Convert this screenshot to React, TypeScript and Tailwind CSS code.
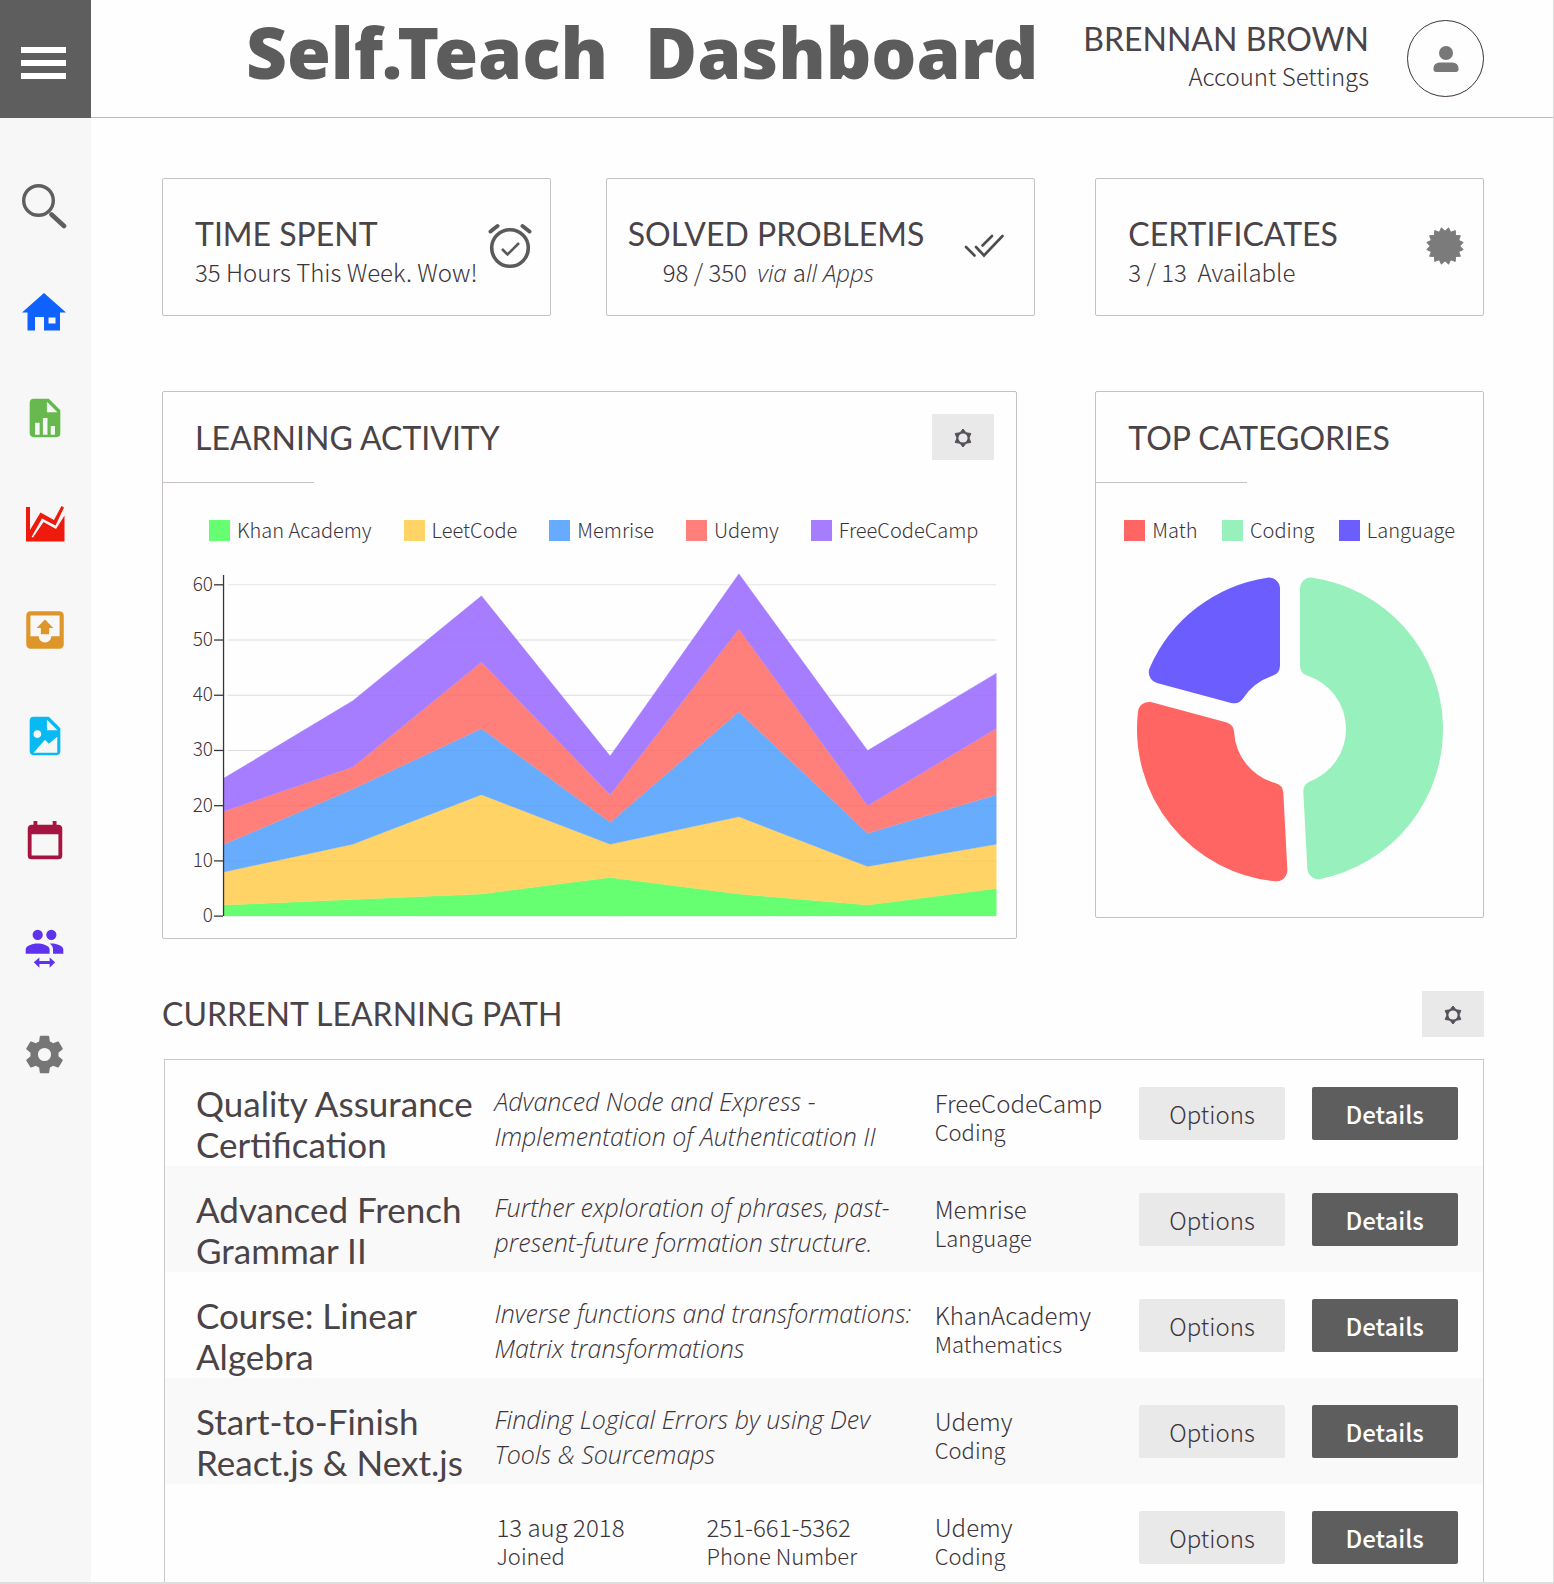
import type { ReactNode } from "react";

const BODY = "font-['Noto_Sans_CJK_SC',sans-serif]";
const ITALIC = "font-['Open_Sans',sans-serif] italic";

const heading = "font-['Lato',sans-serif] text-[32px] leading-10 text-[#4a4347]";

/* ---------- icons ---------- */

type IconProps = { d: string; size: string; color: string };

function PathIcon({ d, size, color }: IconProps) {
  return (
    <svg viewBox="0 0 24 24" className={`${size} ${color}`} fill="currentColor" aria-hidden="true">
      <path fillRule="evenodd" d={d} />
    </svg>
  );
}

const fileChart =
  "M13,9H18.5L13,3.5V9M6,2H14L20,8V20A2,2 0 0,1 18,22H6C4.89,22 4,21.1 4,20V4C4,2.89 4.89,2 6,2M6.8,20.7H9.2V14.5H6.8V20.7M10.9,20.7H13.3V12H10.9V20.7M15,20.7H17.2V16.2H15V20.7Z";
const fileImage =
  "M13,9H18.5L13,3.5V9M6,2H14L20,8V20A2,2 0 0,1 18,22H6C4.89,22 4,21.1 4,20V4C4,2.89 4.89,2 6,2M6,20.7H18.4V12.4L14,16L12,14L6,20.7M8,9A2,2 0 0,0 6,11A2,2 0 0,0 8,13A2,2 0 0,0 10,11A2,2 0 0,0 8,9Z";
const inboxUp =
  "M14,14H10V11H8L12,7L16,11H14V14M5,15V5H19V15H15A3,3 0 0,1 12,18A3,3 0 0,1 9,15H5M19,3H5C3.89,3 3,3.9 3,5V19A2,2 0 0,0 5,21H19A2,2 0 0,0 21,19V5A2,2 0 0,0 19,3Z";
const calendar =
  "M19,19H5V8H19M16,1V3H8V1H6V3H5C3.89,3 3,3.89 3,5V19A2,2 0 0,0 5,21H19A2,2 0 0,0 21,19V5C21,3.89 20.1,3 19,3H18V1Z";
const peopleSwitch =
  "M16,9C18.33,9 23,10.17 23,12.5V15H17V12.5C17,11 16.19,9.89 15.04,9.05L16,9M8,9C10.33,9 15,10.17 15,12.5V15H1V12.5C1,10.17 5.67,9 8,9M8,7A3,3 0 0,1 5,4A3,3 0 0,1 8,1A3,3 0 0,1 11,4A3,3 0 0,1 8,7M16,7A3,3 0 0,1 13,4A3,3 0 0,1 16,1A3,3 0 0,1 19,4A3,3 0 0,1 16,7M9,17.2V19.3H15V17.2L18.25,20L15,23.25V21H9V23.25L5.75,20L9,17.2Z";
const cog =
  "M12,15.5A3.5,3.5 0 0,1 8.5,12A3.5,3.5 0 0,1 12,8.5A3.5,3.5 0 0,1 15.5,12A3.5,3.5 0 0,1 12,15.5M19.43,12.97C19.47,12.65 19.5,12.33 19.5,12C19.5,11.67 19.47,11.34 19.43,11L21.54,9.37C21.73,9.22 21.78,8.95 21.66,8.73L19.66,5.27C19.54,5.05 19.27,4.96 19.05,5.05L16.56,6.05C16.04,5.66 15.5,5.32 14.87,5.07L14.5,2.42C14.46,2.18 14.25,2 14,2H10C9.75,2 9.54,2.18 9.5,2.42L9.13,5.07C8.5,5.32 7.96,5.66 7.44,6.05L4.95,5.05C4.73,4.96 4.46,5.05 4.34,5.27L2.34,8.73C2.21,8.95 2.27,9.22 2.46,9.37L4.57,11C4.53,11.34 4.5,11.67 4.5,12C4.5,12.33 4.53,12.65 4.57,12.97L2.46,14.63C2.27,14.78 2.21,15.05 2.34,15.27L4.34,18.73C4.46,18.95 4.73,19.03 4.95,18.95L7.44,17.94C7.96,18.34 8.5,18.68 9.13,18.93L9.5,21.58C9.54,21.82 9.75,22 10,22H14C14.25,22 14.46,21.82 14.5,21.58L14.87,18.93C15.5,18.67 16.04,18.34 16.56,17.94L19.05,18.95C19.27,19.03 19.54,18.95 19.66,18.73L21.66,15.27C21.78,15.05 21.73,14.78 21.54,14.63L19.43,12.97Z";

const SearchIcon = () => (
  <svg viewBox="1 0 46 46" className="size-[46px] text-[#5f5f5f]" fill="none" stroke="currentColor" aria-hidden="true">
    <circle cx="17.5" cy="17.5" r="14.8" strokeWidth="3.4" />
    <path d="M30.5 31.5 43 43" strokeWidth="4.6" strokeLinecap="round" />
  </svg>
);

const HomeIcon = () => (
  <svg viewBox="1 0 46 40" className="h-10 w-[46px] text-[#0f62fe]" fill="currentColor" aria-hidden="true">
    <path fillRule="evenodd" d="M23 1 45 20.5H39V38.5H23V25H14V38.5H6.500V20.500H1ZM27.500 25.500V31.500H34.500V25.500Z" />
  </svg>
);

const AreaIcon = () => (
  <svg viewBox="0 0 40 36" className="h-9 w-10 text-[#ee1a0c]" fill="currentColor" aria-hidden="true">
    <path d="M1 1H5V24L15.500 6.500 29 14 36.500 0 39 1.500 30.500 19.500 17 12.500 6.500 31 8 31.500 18.500 16 31 23 39.500 9.500V35.500H1Z" />
  </svg>
);

const ClockIcon = () => (
  <svg viewBox="0 0 46 46" className="size-[46px] shrink-0 text-[#5a5a5a]" fill="none" stroke="currentColor" aria-hidden="true">
    <circle cx="23" cy="25" r="18.300" strokeWidth="3.600" />
    <path d="m15 26 5.500 5.500L32 20" strokeWidth="2.600" />
    <path d="m3.500 8.500 7-5.500M42.500 8.500l-7-5.500" strokeWidth="4" strokeLinecap="round" />
  </svg>
);

const DoubleCheckIcon = () => (
  <svg viewBox="0 0 40 24" className="h-6 w-10 shrink-0 text-[#4d4d4d]" fill="none" stroke="currentColor" strokeWidth="2.600" strokeLinecap="round" aria-hidden="true">
    <path d="m2 13 8.500 8.500M12 13l8 8.500L38.500 2M28 2 18.500 11.500" />
  </svg>
);

function starPoints(count: number, outer: number, inner: number, turn: number) {
  return Array.from({ length: count * 2 }, (_, i) => {
    const r = i % 2 ? inner : outer;
    const a = ((i + turn) * Math.PI) / count;
    return `${(r * Math.sin(a)).toFixed(2)},${(-r * Math.cos(a)).toFixed(2)}`;
  }).join(" ");
}

const SealIcon = () => (
  <svg viewBox="-20 -20 40 40" className="size-10 shrink-0 text-[#7b7b7b]" fill="currentColor" aria-hidden="true">
    <polygon points={starPoints(16, 18.5, 14.8, 1)} stroke="currentColor" strokeWidth="1" strokeLinejoin="round" />
  </svg>
);

const PersonIcon = () => (
  <svg viewBox="0 0 26 28" className="h-7 w-[26px] text-[#787878]" fill="currentColor" aria-hidden="true">
    <circle cx="13" cy="8" r="7" />
    <path d="M0.500 23.500C0.500 19 4 17.500 8 17.500H18C22 17.500 25.500 19 25.500 23.500V24.500C25.500 26 24.500 27 23 27H3C1.500 27 0.500 26 0.500 24.500Z" />
  </svg>
);

function GearButton({ label }: { label: string }) {
  return (
    <button type="button" aria-label={label} className="flex h-[46px] w-[62px] items-center justify-center bg-[#e9e9e9] pt-px text-[#55505a]">
      <svg viewBox="-10 -10 20 20" className="size-5" aria-hidden="true">
        <polygon points={starPoints(6, 9, 6, 0)} fill="currentColor" stroke="currentColor" strokeWidth="1" strokeLinejoin="round" />
        <circle r="4.600" fill="#e9e9e9" />
      </svg>
    </button>
  );
}

/* ---------- sidebar and header ---------- */

const nav: { label: string; icon: ReactNode }[] = [
  { label: "Search", icon: <SearchIcon /> },
  { label: "Home", icon: <HomeIcon /> },
  { label: "Reports", icon: <PathIcon d={fileChart} size="size-[46px]" color="text-[#65b94d]" /> },
  { label: "Trends", icon: <AreaIcon /> },
  { label: "Inbox", icon: <PathIcon d={inboxUp} size="size-[50px]" color="text-[#de962b]" /> },
  { label: "Images", icon: <PathIcon d={fileImage} size="size-[46px]" color="text-[#08b9f2]" /> },
  { label: "Calendar", icon: <PathIcon d={calendar} size="size-[46px]" color="text-[#a51542]" /> },
  { label: "People", icon: <PathIcon d={peopleSwitch} size="size-[41px]" color="text-[#5f33ee]" /> },
  { label: "Settings", icon: <PathIcon d={cog} size="size-[45px]" color="text-[#767676]" /> },
];

function Sidebar() {
  return (
    <aside className="w-[91px] shrink-0 bg-[#f7f7f7]">
      <button type="button" aria-label="Menu" className="flex h-[118px] w-full flex-col items-center justify-center gap-[7px] bg-[#5e5e5e] pt-2 pr-1">
        <span className="h-[6px] w-[45px] bg-white" />
        <span className="h-[6px] w-[45px] bg-white" />
        <span className="h-[6px] w-[45px] bg-white" />
      </button>
      <nav className="flex flex-col pt-[35px]">
        {nav.map((item) => (
          <a key={item.label} href="#" aria-label={item.label} className="flex h-[106px] items-center justify-center pr-[2px]">
            {item.icon}
          </a>
        ))}
      </nav>
    </aside>
  );
}

function Header() {
  return (
    <header className="flex h-[118px] items-start border-b border-[#c0b8ba] pr-[69px]">
      <h1 className="flex-1 pt-2 pl-[155px] font-['Noto_Sans',sans-serif] text-[71px] leading-[88px] font-black whitespace-nowrap text-[#5c5c5c]">
        Self.Teach&nbsp; Dashboard
      </h1>
      <div className="flex shrink-0 items-start gap-[38px] pt-[19px]">
        <div className="text-right">
          <div className={heading}>BRENNAN BROWN</div>
          <a href="#" className={`${BODY} block text-2xl leading-[34px] font-light text-[#3c343a]`}>
            Account Settings
          </a>
        </div>
        <button type="button" aria-label="Profile" className="mt-px flex size-[77px] items-center justify-center rounded-full border border-[#3d3238]">
          <PersonIcon />
        </button>
      </div>
    </header>
  );
}

/* ---------- summary cards ---------- */

const card = "rounded-[2px] border border-[#c6c1c2]";
const sub = `${BODY} text-2xl leading-[36px] font-light whitespace-nowrap text-[#3c343a]`;

function Summary() {
  return (
    <section className="flex">
      <div className={`${card} flex h-[138px] w-[29.4%] justify-between pt-[35px] pr-[17px] pl-8`}>
        <div>
          <h2 className={heading}>TIME SPENT</h2>
          <p className={sub}>35 Hours This Week. Wow!</p>
        </div>
        <div className="pt-[9px]">
          <ClockIcon />
        </div>
      </div>
      <div className={`${card} ml-[55px] flex h-[138px] w-[32.5%] justify-between pt-[35px] pr-[30px] pl-[21px]`}>
        <div>
          <h2 className={heading}>SOLVED PROBLEMS</h2>
          <p className={`${sub} pl-[35px]`}>
            98 / 350&nbsp; <span className={ITALIC}>via </span>a<span className={ITALIC}>ll Apps</span>
          </p>
        </div>
        <div className="pt-[20px]">
          <DoubleCheckIcon />
        </div>
      </div>
      <div className={`${card} ml-auto flex h-[138px] w-[29.4%] justify-between pt-[35px] pr-[18px] pl-8`}>
        <div>
          <h2 className={heading}>CERTIFICATES</h2>
          <p className={sub}>3 / 13&nbsp; Available</p>
        </div>
        <div className="pt-3">
          <SealIcon />
        </div>
      </div>
    </section>
  );
}

/* ---------- charts ---------- */

const series = [
  { name: "Khan Academy", swatch: "bg-[#66ff71]", fill: "#66ff71", tops: [2, 3, 4, 7, 4, 2, 5] },
  { name: "LeetCode", swatch: "bg-[#ffd366]", fill: "#ffd366", tops: [8, 13, 22, 13, 18, 9, 13] },
  { name: "Memrise", swatch: "bg-[#66abff]", fill: "#68acfe", tops: [13, 23, 34, 17, 37, 15, 22] },
  { name: "Udemy", swatch: "bg-[#ff7f7a]", fill: "#ff7f7a", tops: [19, 27, 46, 22, 52, 20, 34] },
  { name: "FreeCodeCamp", swatch: "bg-[#a77dff]", fill: "#a77dff", tops: [25, 39, 58, 29, 62, 30, 44] },
];

function Legend({ items, className }: { items: { name: string; swatch: string }[]; className: string }) {
  return (
    <ul className={`flex ${className}`}>
      {items.map((item) => (
        <li key={item.name} className={`${BODY} flex items-center gap-[7px] text-[20px] leading-[26px] font-light whitespace-nowrap text-[#3c343a]`}>
          <span className={`size-[21px] ${item.swatch}`} />
          {item.name}
        </li>
      ))}
    </ul>
  );
}

function AreaChart() {
  const left = 61;
  const right = 833;
  const base = 347;
  const unit = 5.52;
  const x = (i: number) => left + ((right - left) * i) / 6;
  const y = (v: number) => base - v * unit;
  return (
    <svg viewBox="0 0 853 360" className="block w-full" role="img" aria-label="Learning activity by platform">
      {[10, 20, 30, 40, 50, 60].map((v) => (
        <line key={v} x1={left + 4} x2={right} y1={y(v)} y2={y(v)} stroke="#e4e4e4" strokeWidth="1" />
      ))}
      {series.map((s, k) => {
        const floor = k === 0 ? s.tops.map(() => 0) : series[k - 1].tops;
        const upper = s.tops.map((v, i) => `${x(i)},${y(v)}`);
        const lower = floor.map((v, i) => `${x(i)},${y(v)}`).reverse();
        return <polygon key={s.name} fill={s.fill} stroke={s.fill} strokeWidth="0.300" points={[...upper, ...lower].join(" ")} />;
      })}
      {[10, 20, 30, 40, 50].map((v) => (
        <line key={v} x1={left} x2={right} y1={y(v)} y2={y(v)} stroke="#000" strokeOpacity="0.030" strokeWidth="1" />
      ))}
      <path d={`M60.500 6V${base}`} stroke="#3c343a" strokeWidth="1.300" />
      {[0, 10, 20, 30, 40, 50, 60].map((v) => (
        <g key={v}>
          <path d={`M51 ${y(v)}H60`} stroke="#3c343a" strokeWidth="1.300" />
          <text x="50" y={y(v) + 6} textAnchor="end" fill="#3c343a" className={`${BODY} text-[19px] font-light`}>
            {v}
          </text>
        </g>
      ))}
    </svg>
  );
}

/* Each slice is inset by the corner radius; a round-joined stroke grows it back. */
function slicePath(startDeg: number, endDeg: number) {
  const corner = 11;
  const outer = 153 - corner;
  const inner = 56 + corner;
  const half = 10 + corner;
  const at = (deg: number, r: number, side: number) => {
    const a = (deg * Math.PI) / 180 + side * Math.asin(half / r);
    return `${(r * Math.sin(a)).toFixed(2)} ${(-r * Math.cos(a)).toFixed(2)}`;
  };
  return `M${at(startDeg, outer, 1)}A${outer} ${outer} 0 0 1 ${at(endDeg, outer, -1)}L${at(endDeg, inner, -1)}A${inner} ${inner} 0 0 0 ${at(startDeg, inner, 1)}Z`;
}

const categories = [
  { name: "Math", swatch: "bg-[#ff6663]", fill: "#ff6663", start: 177, end: 285 },
  { name: "Coding", swatch: "bg-[#98f1bc]", fill: "#98f1bc", start: 0, end: 177 },
  { name: "Language", swatch: "bg-[#6c5dff]", fill: "#6c5dff", start: 285, end: 360 },
];

function Donut() {
  return (
    <svg viewBox="-154 -154 308 308" className="block size-[308px]" role="img" aria-label="Top categories">
      {categories.map((c) => (
        <path key={c.name} d={slicePath(c.start, c.end)} fill={c.fill} stroke={c.fill} strokeWidth="22" strokeLinejoin="round" />
      ))}
    </svg>
  );
}

function Charts() {
  return (
    <section className="mt-[75px] flex items-start justify-between">
      <div className={`${card} h-[548px] w-[64.7%]`}>
        <div className="flex items-start justify-between pt-[22px] pr-[22px] pl-8">
          <h2 className={`${heading} pt-1`}>LEARNING ACTIVITY</h2>
          <GearButton label="Activity settings" />
        </div>
        <div className="mt-[22px] w-[151px] border-t border-[#c6c1c2]" />
        <Legend items={series} className="justify-between pt-[34px] pr-[38px] pl-[46px]" />
        <div className="mt-[26px]">
          <AreaChart />
        </div>
      </div>
      <div className={`${card} flex h-[527px] w-[29.4%] flex-col`}>
        <h2 className={`${heading} pt-[26px] pl-8`}>TOP CATEGORIES</h2>
        <div className="mt-[24px] w-[151px] border-t border-[#c6c1c2]" />
        <Legend items={categories} className="justify-between pt-[34px] pr-7 pl-7" />
        <div className="mt-[32px] flex justify-center">
          <Donut />
        </div>
      </div>
    </section>
  );
}

/* ---------- learning path ---------- */

const courses = [
  { name: ["Quality Assurance", "Certification"], text: ["Advanced Node and Express -", "Implementation of Authentication II"], site: "FreeCodeCamp", topic: "Coding" },
  { name: ["Advanced French", "Grammar II"], text: ["Further exploration of phrases, past-", "present-future formation structure."], site: "Memrise", topic: "Language" },
  { name: ["Course: Linear", "Algebra"], text: ["Inverse functions and transformations:", "Matrix transformations"], site: "KhanAcademy", topic: "Mathematics" },
  { name: ["Start-to-Finish", "React.js & Next.js"], text: ["Finding Logical Errors by using Dev", "Tools & Sourcemaps"], site: "Udemy", topic: "Coding" },
  { name: [], text: [], site: "Udemy", topic: "Coding" },
];

function Pair({ top, bottom }: { top: string; bottom: string }) {
  return (
    <div className={`${BODY} font-light whitespace-nowrap text-[#3c343a]`}>
      <div className="text-2xl leading-[29px]">{top}</div>
      <div className="text-[22px] leading-[29px]">{bottom}</div>
    </div>
  );
}

function LearningPath() {
  const button = `${BODY} h-[53px] w-[146px] rounded-[2px] text-2xl`;
  return (
    <section className="mt-[52px]">
      <div className="flex items-start justify-between">
        <h2 className={`${heading} pt-[3px]`}>CURRENT LEARNING PATH</h2>
        <GearButton label="Path settings" />
      </div>
      <div className="mt-[22px] ml-[2px] border border-[#c9c9c9]">
        <table className="w-full table-fixed border-collapse">
          <colgroup>
            <col className="w-[25%]" />
            <col className="w-[33.4%]" />
            <col className="w-[15.5%]" />
            <col className="w-[13.1%]" />
            <col className="w-[13%]" />
          </colgroup>
          <tbody>
            {courses.map((c, i) => (
              <tr key={i} className="h-[106px] align-top even:bg-[#f9f9f9]">
                <td className="pt-[23px] pl-[31px] font-['Lato',sans-serif] text-[35px] leading-[41px] whitespace-nowrap text-[#4a4347]">
                  {c.name.map((line) => (
                    <div key={line}>{line}</div>
                  ))}
                </td>
                {c.text.length > 0 ? (
                  <td className={`${ITALIC} pt-6 text-[25px] leading-[35px] font-light whitespace-nowrap text-[#3c343a]`}>
                    {c.text.map((line) => (
                      <div key={line}>{line}</div>
                    ))}
                  </td>
                ) : (
                  <td className="pt-7">
                    <div className="flex pl-[2px]">
                      <div className="w-[210px]">
                        <Pair top="13 aug 2018" bottom="Joined" />
                      </div>
                      <Pair top="251-661-5362" bottom="Phone Number" />
                    </div>
                  </td>
                )}
                <td className="pt-7">
                  <Pair top={c.site} bottom={c.topic} />
                </td>
                <td className="pt-[27px]">
                  <button type="button" className={`${button} bg-[#e9e9e9] font-light text-[#3c343a]`}>
                    Options
                  </button>
                </td>
                <td className="pt-[27px]">
                  <button type="button" className={`${button} bg-[#5e5e5e] font-medium text-white`}>
                    Details
                  </button>
                </td>
              </tr>
            ))}
          </tbody>
        </table>
      </div>
    </section>
  );
}

export default function App() {
  return (
    <div className="flex h-screen overflow-hidden border-r border-b-2 border-[#dedede] bg-[#fefefe]">
      <Sidebar />
      <div className="min-w-0 flex-1">
        <Header />
        <main className="pt-[60px] pr-[69px] pl-[71px]">
          <Summary />
          <Charts />
          <LearningPath />
        </main>
      </div>
    </div>
  );
}
